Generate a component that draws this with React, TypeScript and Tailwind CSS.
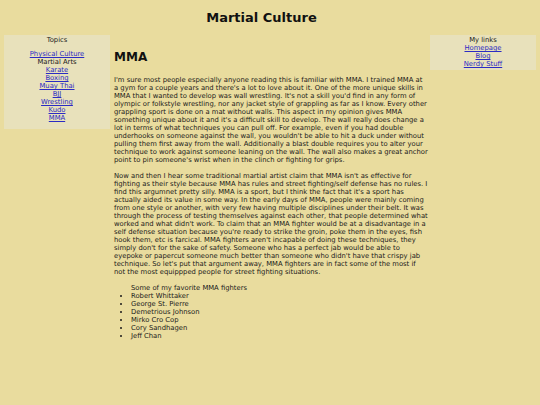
import React from "react";

const font = { fontFamily: '"DejaVu Sans", Verdana, sans-serif' };

export default function App() {
  const topics = ["Karate", "Boxing", "Muay Thai", "BJJ", "Wrestling", "Kudo", "MMA"];
  const fighters = [
    "Robert Whittaker",
    "George St. Pierre",
    "Demetrious Johnson",
    "Mirko Cro Cop",
    "Cory Sandhagen",
    "Jeff Chan",
  ];
  return (
    <div
      className="w-[540px] h-[405px] bg-[#e9dc9e] text-[#1a1a1a] overflow-hidden"
      style={font}
    >
      <h1 className="text-center font-bold text-[13px] leading-[20px] pt-[8px] pr-[17px] h-[35px] m-0 text-[#111]">
        Martial Culture
      </h1>
      <div className="flex items-start pl-[4px]">
        <div className="w-[106px] shrink-0 bg-[#e8e1bb] text-center text-[6.8px] leading-[8px] pt-[1px] pb-[7px]">
          <div className="h-[14px]">Topics</div>
          <div><a className="text-[#2b2bc4] underline" href="#">Physical Culture</a></div>
          <div>Martial Arts</div>
          {topics.map((t) => (
            <div key={t}>
              <a className="text-[#2b2bc4] underline" href="#">{t}</a>
            </div>
          ))}
        </div>
        <div className="w-[314px] shrink-0 ml-[4px] mr-[2px] text-[6.8px] leading-[8px]">
          <h2 className="font-bold text-[12px] leading-[16px] mt-[14px] mb-[11px] text-[#111]">MMA</h2>
          <p className="mb-[8px]">
            I'm sure most people especially anyone reading this is familiar with MMA. I trained MMA at a gym for a couple years and there's a lot to love about it. One of the more unique skills in MMA that I wanted to develop was wall wrestling. It's not a skill you'd find in any form of olympic or folkstyle wrestling, nor any jacket style of grappling as far as I know. Every other grappling sport is done on a mat without walls. This aspect in my opinion gives MMA something unique about it and it's a difficult skill to develop. The wall really does change a lot in terms of what techniques you can pull off. For example, even if you had double underhooks on someone against the wall, you wouldn't be able to hit a duck under without pulling them first away from the wall. Additionally a blast double requires you to alter your technique to work against someone leaning on the wall. The wall also makes a great anchor point to pin someone's wrist when in the clinch or fighting for grips.
          </p>
          <p className="mb-[8px]">
            Now and then I hear some traditional martial artist claim that MMA isn't as effective for fighting as their style because MMA has rules and street fighting/self defense has no rules. I find this argumnet pretty silly. MMA is a sport, but I think the fact that it's a sport has actually aided its value in some way. In the early days of MMA, people were mainly coming from one style or another, with very few having multiple disciplines under their belt. It was through the process of testing themselves against each other, that people determined what worked and what didn't work. To claim that an MMA fighter would be at a disadvantage in a self defense situation because you're ready to strike the groin, poke them in the eyes, fish hook them, etc is farcical. MMA fighters aren't incapable of doing these techniques, they simply don't for the sake of safety. Someone who has a perfect jab would be able to eyepoke or papercut someone much better than someone who didn't have that crispy jab technique. So let's put that argument away, MMA fighters are in fact some of the most if not the most equippped people for street fighting situations.
          </p>
          <ul className="pl-[17px]">
            <div>Some of my favorite MMA fighters</div>
            {fighters.map((f) => (
              <li key={f} className="list-disc">{f}</li>
            ))}
          </ul>
        </div>
        <div className="w-[106px] shrink-0 bg-[#e8e1bb] text-center text-[6.8px] leading-[8px] pt-[1px] pb-[2px]">
          <div>My links</div>
          <div><a className="text-[#2b2bc4] underline" href="#">Homepage</a></div>
          <div><a className="text-[#2b2bc4] underline" href="#">Blog</a></div>
          <div><a className="text-[#2b2bc4] underline" href="#">Nerdy Stuff</a></div>
        </div>
      </div>
    </div>
  );
}
